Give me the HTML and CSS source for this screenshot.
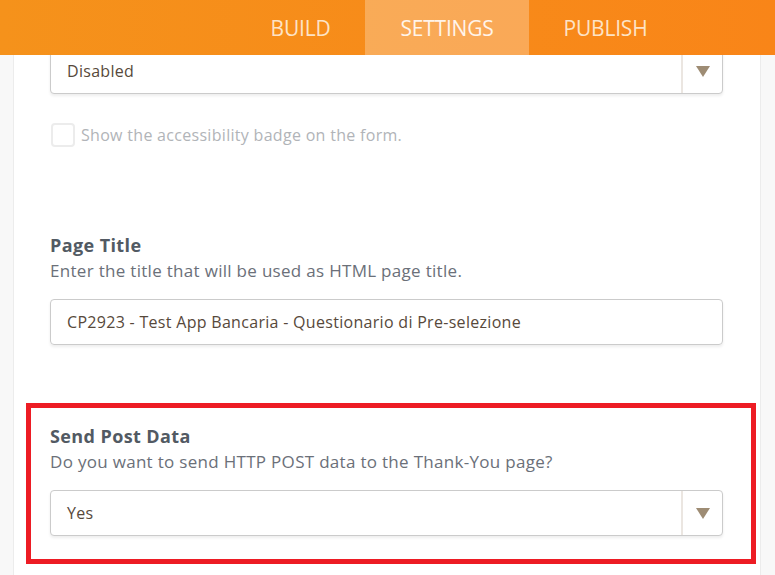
FILE: index.html
```html
<!DOCTYPE html>
<html lang="en">
<head>
  <meta charset="UTF-8" />
  <meta name="viewport" content="width=device-width, initial-scale=1.0"/>
  <title>Form Settings</title>
  <link rel="stylesheet" href="styles.css">
</head>
<body>

  <header class="topbar">
    <nav class="tabs">
      <a class="tab tab-build">BUILD</a>
      <a class="tab tab-settings active">SETTINGS</a>
      <a class="tab tab-publish">PUBLISH</a>
    </nav>
  </header>

  <div class="layout">
    <aside class="side side-left"></aside>

    <main class="panel">
      <div class="select">
        <span class="select-value">Disabled</span>
        <span class="select-arrow"><span class="triangle"></span></span>
      </div>

      <label class="check-row">
        <span class="checkbox"></span>
        <span class="check-label">Show the accessibility badge on the form.</span>
      </label>

      <section class="field field-title-page">
        <h2 class="field-title">Page Title</h2>
        <p class="field-desc">Enter the title that will be used as HTML page title.</p>
        <div class="text-input">CP2923 - Test App Bancaria - Questionario di Pre-selezione</div>
      </section>

      <section class="field field-highlight">
        <h2 class="field-title">Send Post Data</h2>
        <p class="field-desc">Do you want to send HTTP POST data to the Thank-You page?</p>
        <div class="select">
          <span class="select-value">Yes</span>
          <span class="select-arrow"><span class="triangle"></span></span>
        </div>
      </section>
    </main>

    <aside class="side side-right"></aside>
  </div>

</body>
</html>
```

FILE: styles.css
```css
* {
  margin: 0;
  padding: 0;
  box-sizing: border-box;
  font-family: 'Open Sans', 'Noto Sans', sans-serif;
}

body, html {
  height: 100%;
  overflow: hidden;
  background-color: #f7f7f7;
}

/* top bar */
.topbar {
  position: fixed;
  top: 0;
  left: 0;
  width: 100%;
  height: 55px;
  background: linear-gradient(to right, #f5921b, #f98518);
  z-index: 2;
}

.tabs {
  display: flex;
  height: 100%;
  padding-left: 236px;
}

.tab {
  display: flex;
  align-items: center;
  justify-content: center;
  height: 100%;
  font-size: 21px;
  color: #fde3c6;
  letter-spacing: -0.2px;
}

.tab-build { width: 129px; }
.tab-settings { width: 164px; }
.tab-publish { width: 153px; }

.tab.active {
  background-color: rgba(255, 255, 255, 0.27);
  color: #fff4ea;
}

/* page columns */
.layout {
  display: flex;
  height: 100%;
}

.side {
  background-color: #f8f8f8;
}

.side-left {
  width: 14px;
  border-right: 1px solid #ececec;
}

.side-right {
  width: 15px;
  border-left: 1px solid #ececec;
}

.panel {
  flex: 1;
  background-color: #fff;
  padding: 48px 37px 0 36px;
}

/* select */
.select {
  display: flex;
  height: 46px;
  border: 1px solid #cbcbcb;
  border-radius: 4px;
  background-color: #fff;
  box-shadow: 0 2px 3px rgba(0, 0, 0, 0.07);
}

.select-value {
  flex: 1;
  padding-left: 16px;
  display: flex;
  align-items: center;
  font-size: 16px;
  letter-spacing: 0.3px;
  color: #57493b;
}

.select-arrow {
  width: 41px;
  border-left: 2px solid #ebe6e1;
  display: flex;
  align-items: center;
  justify-content: center;
}

.triangle {
  width: 0;
  height: 0;
  border-left: 7.5px solid transparent;
  border-right: 7.5px solid transparent;
  border-top: 11px solid #9e8c74;
  margin-top: 1px;
}

/* checkbox */
.check-row {
  display: flex;
  align-items: center;
  gap: 6px;
  margin-top: 29px;
  padding-left: 1px;
}

.checkbox {
  width: 24px;
  height: 24px;
  border: 2px solid #ececec;
  border-radius: 4px;
}

.check-label {
  font-size: 16px;
  letter-spacing: 0.3px;
  color: #b1b4b8;
}

/* fields */
.field-title {
  font-size: 18px;
  font-weight: 700;
  letter-spacing: 0.4px;
  color: #525a63;
  line-height: 26px;
}

.field-desc {
  font-size: 17px;
  letter-spacing: 0.3px;
  color: #6b7079;
  line-height: 26px;
}

.field-title-page {
  margin-top: 85px;
}

.text-input {
  margin-top: 15px;
  height: 46px;
  border: 1px solid #cbcbcb;
  border-radius: 4px;
  box-shadow: 0 2px 3px rgba(0, 0, 0, 0.07);
  display: flex;
  align-items: center;
  padding-left: 16px;
  font-size: 16px;
  letter-spacing: 0.3px;
  color: #57493b;
}

.field-highlight {
  margin: 58px -33px 0 -24px;
  border: 5px solid #ed1c24;
  padding: 15px 28px 23px 19px;
}

.field-highlight .select {
  margin-top: 15px;
}
```
